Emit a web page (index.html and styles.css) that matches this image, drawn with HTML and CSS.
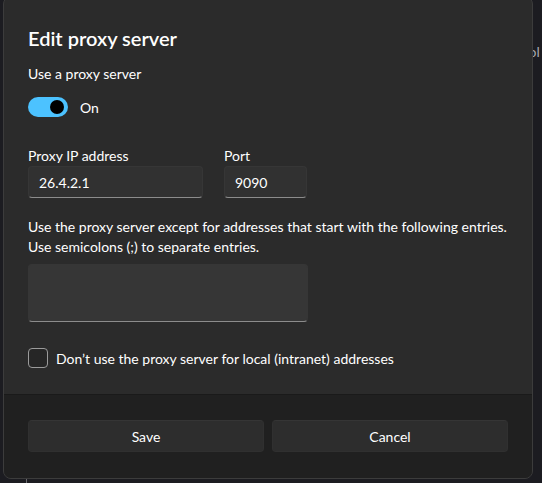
FILE: index.html
```html
<!DOCTYPE html>
<html lang="en">
<head>
    <meta charset="UTF-8">
    <meta name="viewport" content="width=device-width, initial-scale=1.0">
    <title>Edit proxy server</title>
    <link rel="stylesheet" href="styles.css">
</head>
<body>
    <!-- settings page behind the dialog -->
    <div class="page">
        <span class="page-text">Tool</span>
        <span class="page-rule"></span>
    </div>

    <div class="dialog" role="dialog" aria-labelledby="dialog-title">
        <div class="dialog-body">
            <h1 id="dialog-title">Edit proxy server</h1>

            <p class="setting-label">Use a proxy server</p>
            <label class="toggle-row">
                <span class="toggle"><span class="knob"></span></span>
                <span>On</span>
            </label>

            <div class="address-row">
                <div class="field field-ip">
                    <label for="ip">Proxy IP address</label>
                    <input type="text" id="ip" value="26.4.2.1">
                </div>
                <div class="field field-port">
                    <label for="port">Port</label>
                    <input type="text" id="port" value="9090">
                </div>
            </div>

            <p class="hint">Use the proxy server except for addresses that start with the following entries. Use semicolons (;) to separate entries.</p>
            <textarea class="exceptions"></textarea>

            <label class="check-row">
                <span class="checkbox"></span>
                <span>Don’t use the proxy server for local (intranet) addresses</span>
            </label>
        </div>

        <div class="dialog-footer">
            <button type="button">Save</button>
            <button type="button">Cancel</button>
        </div>
    </div>
</body>
</html>
```

FILE: styles.css
```css
body {
    font-family: "Segoe UI", Lato, sans-serif;
    font-size: 14px;
    margin: 0;
    padding: 0;
    background-color: #1c1c21;
    color: #fff;
    width: 542px;
    height: 483px;
    overflow: hidden;
    position: relative;
}

.page {
    height: 100%;
}

.page-text {
    position: absolute;
    left: 514px;
    top: 43px;
    color: #a8a8ad;
}

.page-rule {
    position: absolute;
    left: 26px;
    top: 470px;
    width: 1px;
    height: 20px;
    background-color: #6a6a6e;
}

.dialog {
    position: absolute;
    left: 3px;
    top: -4px;
    width: 530px;
    height: 483px;
    box-sizing: border-box;
    display: flex;
    flex-direction: column;
    background-color: #2b2b2b;
    border: 1px solid #3c3c3c;
    border-radius: 8px;
    overflow: hidden;
}

.dialog-body {
    flex: 1;
    padding: 27px 24px 0;
}

h1 {
    font-size: 20px;
    font-weight: 600;
    line-height: 28px;
    margin: 0;
}

.setting-label {
    margin: 12px 0 0;
    line-height: 20px;
}

.toggle-row {
    display: flex;
    align-items: center;
    gap: 12px;
    margin-top: 13px;
    height: 20px;
}

.toggle {
    width: 40px;
    height: 20px;
    border-radius: 10px;
    background-color: #4cc2ff;
    display: flex;
    align-items: center;
    justify-content: flex-end;
    padding-right: 4px;
    box-sizing: border-box;
}

.knob {
    width: 14px;
    height: 14px;
    border-radius: 50%;
    background-color: #000;
}

.address-row {
    display: flex;
    gap: 21px;
    margin-top: 29px;
}

.field label {
    display: block;
    line-height: 20px;
}

.field input,
.exceptions {
    display: block;
    box-sizing: border-box;
    font: inherit;
    color: #fff;
    background-color: #313131;
    border: 1px solid #363636;
    border-bottom-color: #8c8c8c;
    border-radius: 4px;
    outline: none;
}

.field input {
    height: 32px;
    padding: 0 10px;
}

.field-ip input {
    width: 175px;
}

.field-port input {
    width: 83px;
}

.hint {
    margin: 19px 0 0;
    line-height: 20px;
    width: 482px;
}

.exceptions {
    width: 280px;
    height: 58px;
    margin-top: 7px;
    resize: none;
    background-color: #363636;
}

.check-row {
    display: flex;
    align-items: center;
    gap: 8px;
    margin-top: 26px;
}

.checkbox {
    width: 20px;
    height: 20px;
    box-sizing: border-box;
    border: 1px solid #9b9b9b;
    border-radius: 4px;
    background-color: #262626;
}

.dialog-footer {
    display: flex;
    gap: 8px;
    padding: 25px 24px 26px;
    background-color: #202020;
    border-top: 1px solid #1a1a1a;
}

.dialog-footer button {
    flex: 1;
    height: 32px;
    font: inherit;
    color: #fff;
    background-color: #2d2d2d;
    border: 1px solid #303030;
    border-top-color: #353535;
    border-radius: 4px;
}
```
